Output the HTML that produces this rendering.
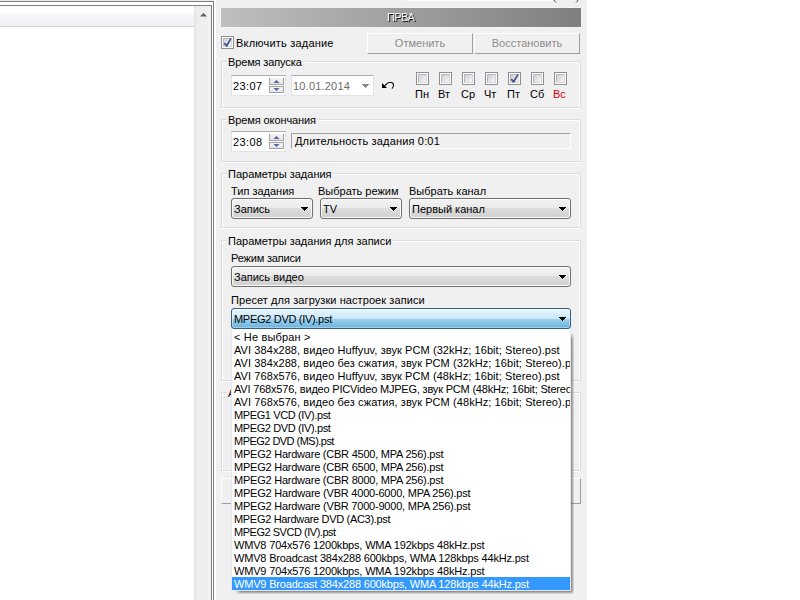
<!DOCTYPE html>
<html><head><meta charset="utf-8"><style>
*{box-sizing:border-box;margin:0;padding:0}
html,body{width:800px;height:600px;overflow:hidden;background:#fff}
body{position:relative;font-family:"Liberation Sans",sans-serif;font-size:11px;color:#000}
.a{position:absolute}
.t{position:absolute;font:11px/13px "Liberation Sans",sans-serif;white-space:pre;color:#000}
.grp{position:absolute;border:1px solid #d9dcdf;border-radius:1px}
.grpw{position:absolute;border:1px solid #fff;border-radius:1px}
.edit{position:absolute;background:#fff;border:1px solid #e0e3ea;border-top-color:#abadb3}
.cb{position:absolute;width:13px;height:13px;border:1px solid #8e8f8f;background:#fff}
.cb i{position:absolute;left:1px;top:1px;width:9px;height:9px;background:linear-gradient(135deg,#cdcfd2,#f7f7f7);border:1px solid #b5b8bc;border-right-color:#d5d7da;border-bottom-color:#d5d7da}
.combo{position:absolute;height:21px;border:1px solid #707070;border-radius:3px;background:linear-gradient(#f2f2f2 0,#ebebeb 45%,#dddddd 50%,#cfcfcf 100%);box-shadow:inset 0 0 0 1px #fcfcfc}
.arr{position:absolute;width:0;height:0;border-left:3.5px solid transparent;border-right:3.5px solid transparent;border-top:4px solid #000}
.btn{position:absolute;background:#f0f0f0;border-top:1px solid #fff;border-left:1px solid #fff;border-right:1px solid #a0a0a0;border-bottom:1px solid #a0a0a0}
</style></head><body>
<div class="a" style="left:0;top:0;width:214px;height:1px;background:#ececec"></div>
<div class="a" style="left:0;top:1px;width:213px;height:599px;background:#fff;border-top:1px solid #7f8086;border-right:1px solid #7f8086;box-sizing:content-box"></div>
<div class="a" style="left:0;top:5px;width:211px;height:595px;border-top:1px solid #7f8086;border-right:1px solid #7f8086;box-sizing:content-box;background:#fff"></div>
<div class="a" style="left:0;top:14px;width:194px;height:12px;background:linear-gradient(#f6f7f9,#f0f1f3)"></div>
<div class="a" style="left:0;top:26px;width:194px;height:1px;background:#d5d5d5"></div>
<div class="a" style="left:194px;top:6px;width:17px;height:594px;background:linear-gradient(90deg,#e2e2e2,#ededed 3px,#efefef 13px,#f3f3f5)"></div>
<svg class="a" style="left:199px;top:12px" width="10" height="6"><path d="M1 4.5 L4.5 1 L8 4.5 Z" fill="#606060"/></svg>
<div class="a" style="left:214px;top:0;width:2px;height:600px;background:#fff"></div>
<div class="a" style="left:216px;top:0;width:371px;height:600px;background:#f0f0f0"></div>
<div class="a" style="left:407px;top:0;width:145px;height:1px;background:#fff"></div>
<svg class="a" style="left:550px;top:0" width="32" height="4"><path d="M4 -2 Q4 1.5 6 2.5" stroke="#555" stroke-width="1" fill="none"/><path d="M28 -2 Q28 1.5 26 2.5" stroke="#555" stroke-width="1" fill="none"/></svg>
<div class="a" style="left:220px;top:7px;width:362px;height:21px;border:1px solid #f3f3f3"></div>
<div class="a" style="left:221px;top:8px;width:360px;height:19px;background:linear-gradient(90deg,#bfbfbf,#7f7f7f)"></div>
<div class="t" style="left:387px;top:11px;color:#fff;text-shadow:1px 1px 0 #000;letter-spacing:-0.6px">ПРВА</div>
<div class="cb" style="left:221px;top:36px"><i></i></div>
<svg class="a" style="left:221px;top:36px" width="13" height="13"><path d="M2.6 7.5 L3.9 6.5 L5.5 8.3 L9.4 2 L10.7 2.8 L6.2 10.7 L5 10.7 Z" fill="#435192"/></svg>
<div class="t" style="left:236px;top:37px;letter-spacing:0.2px">Включить задание</div>
<div class="btn" style="left:367px;top:33px;width:106px;height:21px"></div>
<div class="t" style="left:367px;top:37px;width:106px;text-align:center;color:#8c8c8c">Отменить</div>
<div class="btn" style="left:474px;top:33px;width:106px;height:21px"></div>
<div class="t" style="left:474px;top:37px;width:106px;text-align:center;color:#8c8c8c">Восстановить</div>
<div class="grpw" style="left:222px;top:62px;width:358px;height:47px"></div>
<div class="grp" style="left:221px;top:61px;width:360px;height:47px"></div>
<div class="a" style="left:227px;top:55px;width:78px;height:12px;background:#f0f0f0"></div>
<div class="t" style="left:228px;top:56px;letter-spacing:-0.13px">Время запуска</div>
<div class="edit" style="left:231px;top:75px;width:55px;height:21px"></div>
<div class="t" style="left:233px;top:80px;letter-spacing:0.4px">23:07</div>
<div class="a" style="left:269px;top:78px;width:15px;height:7px;border:1px solid #a0a0a0;border-top:0;background:linear-gradient(#f3f3f3,#e6e6e6)"></div>
<div class="a" style="left:269px;top:86px;width:15px;height:7px;border:1px solid #a0a0a0;background:linear-gradient(#f3f3f3,#e6e6e6)"></div>
<svg class="a" style="left:273px;top:79px" width="8" height="5"><path d="M0.5 4 L3.5 1 L6.5 4 Z" fill="#5563a8"/></svg>
<svg class="a" style="left:273px;top:87px" width="8" height="5"><path d="M0.5 1 L3.5 4 L6.5 1 Z" fill="#5563a8"/></svg>
<div class="edit" style="left:291px;top:75px;width:83px;height:21px"></div>
<div class="t" style="left:293px;top:80px;color:#6d6d6d;letter-spacing:0.2px">10.01.2014</div>
<svg class="a" style="left:361px;top:83px" width="9" height="7" shape-rendering="crispEdges"><path d="M0 1 H9 V2 H8 V3 H7 V4 H6 V5 H5 V6 H4 V5 H3 V4 H2 V3 H1 V2 H0 Z" fill="rgba(255,255,255,0.7)"/><path d="M1 1 H8 V2 H7 V3 H6 V4 H5 V5 H4 V4 H3 V3 H2 V2 H1 Z" fill="#8a8a8a"/></svg>
<svg class="a" style="left:380px;top:80px" width="16" height="12"><path d="M2 3 L2 8 L7 8 Z" fill="#000"/><path d="M4.6 5.9 L7.8 2.9 Q8.5 2.5 9.5 2.5 L11 2.5 Q13.5 2.5 13.5 5.2 Q13.5 7.2 11.9 8.7" stroke="#000" stroke-width="1.05" fill="none"/></svg>
<div class="cb" style="left:416px;top:72px"><i></i></div>
<div class="t" style="left:415px;top:88px;color:#000">Пн</div>
<div class="cb" style="left:439px;top:72px"><i></i></div>
<div class="t" style="left:438px;top:88px;color:#000">Вт</div>
<div class="cb" style="left:462px;top:72px"><i></i></div>
<div class="t" style="left:461px;top:88px;color:#000">Ср</div>
<div class="cb" style="left:485px;top:72px"><i></i></div>
<div class="t" style="left:484px;top:88px;color:#000">Чт</div>
<div class="cb" style="left:508px;top:72px"><i></i></div>
<svg class="a" style="left:508px;top:72px" width="13" height="13"><path d="M2.6 7.5 L3.9 6.5 L5.5 8.3 L9.4 2 L10.7 2.8 L6.2 10.7 L5 10.7 Z" fill="#435192"/></svg>
<div class="t" style="left:507px;top:88px;color:#000">Пт</div>
<div class="cb" style="left:531px;top:72px"><i></i></div>
<div class="t" style="left:530px;top:88px;color:#000">Сб</div>
<div class="cb" style="left:554px;top:72px"><i></i></div>
<div class="t" style="left:553px;top:88px;color:#d40000">Вс</div>
<div class="grpw" style="left:222px;top:120px;width:358px;height:43px"></div>
<div class="grp" style="left:221px;top:119px;width:360px;height:43px"></div>
<div class="a" style="left:227px;top:113px;width:92px;height:12px;background:#f0f0f0"></div>
<div class="t" style="left:228px;top:114px;letter-spacing:-0.1px">Время окончания</div>
<div class="edit" style="left:231px;top:131px;width:55px;height:21px"></div>
<div class="t" style="left:233px;top:136px;letter-spacing:0.4px">23:08</div>
<div class="a" style="left:269px;top:134px;width:15px;height:7px;border:1px solid #a0a0a0;border-top:0;background:linear-gradient(#f3f3f3,#e6e6e6)"></div>
<div class="a" style="left:269px;top:142px;width:15px;height:7px;border:1px solid #a0a0a0;background:linear-gradient(#f3f3f3,#e6e6e6)"></div>
<svg class="a" style="left:273px;top:135px" width="8" height="5"><path d="M0.5 4 L3.5 1 L6.5 4 Z" fill="#5563a8"/></svg>
<svg class="a" style="left:273px;top:143px" width="8" height="5"><path d="M0.5 1 L3.5 4 L6.5 1 Z" fill="#5563a8"/></svg>
<div class="a" style="left:291px;top:133px;width:280px;height:16px;background:#f0f0f0;border-top:1px solid #a0a0a0;border-left:1px solid #a0a0a0;border-right:1px solid #fff;border-bottom:1px solid #fff"></div>
<div class="t" style="left:295px;top:135px;letter-spacing:0.17px">Длительность задания 0:01</div>
<div class="grpw" style="left:222px;top:174px;width:358px;height:55px"></div>
<div class="grp" style="left:221px;top:173px;width:360px;height:55px"></div>
<div class="a" style="left:227px;top:167px;width:105px;height:12px;background:#f0f0f0"></div>
<div class="t" style="left:228px;top:168px;letter-spacing:0px">Параметры задания</div>
<div class="t" style="left:231px;top:185px">Тип задания</div>
<div class="t" style="left:318px;top:185px">Выбрать режим</div>
<div class="t" style="left:409px;top:185px">Выбрать канал</div>
<div class="combo" style="left:231px;top:198px;width:82px"></div>
<div class="t" style="left:234px;top:203px">Запись</div>
<svg class="a" style="left:300px;top:206px" width="9" height="7" shape-rendering="crispEdges"><path d="M0 1 H9 V2 H8 V3 H7 V4 H6 V5 H5 V6 H4 V5 H3 V4 H2 V3 H1 V2 H0 Z" fill="rgba(255,255,255,0.7)"/><path d="M1 1 H8 V2 H7 V3 H6 V4 H5 V5 H4 V4 H3 V3 H2 V2 H1 Z" fill="#000"/></svg>
<div class="combo" style="left:320px;top:198px;width:82px"></div>
<div class="t" style="left:323px;top:203px">TV</div>
<svg class="a" style="left:389px;top:206px" width="9" height="7" shape-rendering="crispEdges"><path d="M0 1 H9 V2 H8 V3 H7 V4 H6 V5 H5 V6 H4 V5 H3 V4 H2 V3 H1 V2 H0 Z" fill="rgba(255,255,255,0.7)"/><path d="M1 1 H8 V2 H7 V3 H6 V4 H5 V5 H4 V4 H3 V3 H2 V2 H1 Z" fill="#000"/></svg>
<div class="combo" style="left:409px;top:198px;width:162px"></div>
<div class="t" style="left:412px;top:203px">Первый канал</div>
<svg class="a" style="left:558px;top:206px" width="9" height="7" shape-rendering="crispEdges"><path d="M0 1 H9 V2 H8 V3 H7 V4 H6 V5 H5 V6 H4 V5 H3 V4 H2 V3 H1 V2 H0 Z" fill="rgba(255,255,255,0.7)"/><path d="M1 1 H8 V2 H7 V3 H6 V4 H5 V5 H4 V4 H3 V3 H2 V2 H1 Z" fill="#000"/></svg>
<div class="grpw" style="left:222px;top:241px;width:358px;height:141px"></div>
<div class="grp" style="left:221px;top:240px;width:360px;height:141px"></div>
<div class="a" style="left:227px;top:234px;width:165px;height:12px;background:#f0f0f0"></div>
<div class="t" style="left:228px;top:235px;letter-spacing:0px">Параметры задания для записи</div>
<div class="t" style="left:231px;top:252px;letter-spacing:-0.18px">Режим записи</div>
<div class="combo" style="left:231px;top:266px;width:340px"></div>
<div class="t" style="left:234px;top:271px">Запись видео</div>
<svg class="a" style="left:558px;top:274px" width="9" height="7" shape-rendering="crispEdges"><path d="M0 1 H9 V2 H8 V3 H7 V4 H6 V5 H5 V6 H4 V5 H3 V4 H2 V3 H1 V2 H0 Z" fill="rgba(255,255,255,0.7)"/><path d="M1 1 H8 V2 H7 V3 H6 V4 H5 V5 H4 V4 H3 V3 H2 V2 H1 Z" fill="#000"/></svg>
<div class="t" style="left:231px;top:294px;letter-spacing:0.08px">Пресет для загрузки настроек записи</div>
<div class="combo" style="left:231px;top:308px;width:340px;border-color:#365f7e;background:linear-gradient(#eaf6fd 0,#c6e6f8 52.6%,#9dd2ef 52.6%,#69b2dd 100%);box-shadow:inset 0 0 0 1px rgba(255,255,255,0.35)"></div>
<div class="t" style="left:234px;top:313px;letter-spacing:-0.3px">MPEG2 DVD (IV).pst</div>
<svg class="a" style="left:558px;top:316px" width="9" height="7" shape-rendering="crispEdges"><path d="M1 1 H8 V2 H7 V3 H6 V4 H5 V5 H4 V4 H3 V3 H2 V2 H1 Z" fill="#000"/></svg>
<div class="grpw" style="left:222px;top:393px;width:358px;height:79px"></div>
<div class="grp" style="left:221px;top:392px;width:360px;height:79px"></div>
<div class="a" style="left:227px;top:386px;width:99px;height:12px;background:#f0f0f0"></div>
<div class="t" style="left:228px;top:387px;letter-spacing:0px">Аудио</div>
<div class="btn" style="left:221px;top:478px;width:360px;height:26px"></div>
<div class="a" style="left:571px;top:333px;width:3px;height:258px;background:linear-gradient(90deg,rgba(40,40,50,.55),rgba(40,40,40,.3) 50%,rgba(0,0,0,.08));-webkit-mask-image:linear-gradient(transparent,#000 6px)"></div>
<div class="a" style="left:235px;top:591px;width:336px;height:3px;background:linear-gradient(rgba(40,40,50,.55),rgba(40,40,40,.3) 50%,rgba(0,0,0,.08));-webkit-mask-image:linear-gradient(90deg,transparent,#000 6px)"></div>
<div class="a" style="left:571px;top:591px;width:3px;height:3px;background:radial-gradient(circle at 0 0,rgba(40,40,50,.5),rgba(0,0,0,.05) 3px)"></div>
<div class="a" style="left:231px;top:329px;width:340px;height:262px;background:#fff;border:1px solid #e4e8ee;border-top:0;overflow:hidden">
<div class="t" style="left:2px;top:2px;letter-spacing:0.167px">&lt; Не выбран &gt;</div>
<div class="t" style="left:2px;top:15px;letter-spacing:0.081px">AVI 384x288, видео Huffyuv, звук PCM (32kHz; 16bit; Stereo).pst</div>
<div class="t" style="left:2px;top:28px;letter-spacing:0.081px">AVI 384x288, видео без сжатия, звук PCM (32kHz; 16bit; Stereo).pst</div>
<div class="t" style="left:2px;top:41px;letter-spacing:0.081px">AVI 768x576, видео Huffyuv, звук PCM (48kHz; 16bit; Stereo).pst</div>
<div class="t" style="left:2px;top:54px;letter-spacing:-0.192px">AVI 768x576, видео PICVideo MJPEG, звук PCM (48kHz; 16bit; Stereo).pst</div>
<div class="t" style="left:2px;top:67px;letter-spacing:0.081px">AVI 768x576, видео без сжатия, звук PCM (48kHz; 16bit; Stereo).pst</div>
<div class="t" style="left:2px;top:80px;letter-spacing:-0.382px">MPEG1 VCD (IV).pst</div>
<div class="t" style="left:2px;top:93px;letter-spacing:-0.382px">MPEG2 DVD (IV).pst</div>
<div class="t" style="left:2px;top:106px;letter-spacing:-0.529px">MPEG2 DVD (MS).pst</div>
<div class="t" style="left:2px;top:119px;letter-spacing:-0.230px">MPEG2 Hardware (CBR 4500, MPA 256).pst</div>
<div class="t" style="left:2px;top:132px;letter-spacing:-0.230px">MPEG2 Hardware (CBR 6500, MPA 256).pst</div>
<div class="t" style="left:2px;top:145px;letter-spacing:-0.230px">MPEG2 Hardware (CBR 8000, MPA 256).pst</div>
<div class="t" style="left:2px;top:158px;letter-spacing:-0.214px">MPEG2 Hardware (VBR 4000-6000, MPA 256).pst</div>
<div class="t" style="left:2px;top:171px;letter-spacing:-0.214px">MPEG2 Hardware (VBR 7000-9000, MPA 256).pst</div>
<div class="t" style="left:2px;top:184px;letter-spacing:-0.315px">MPEG2 Hardware DVD (AC3).pst</div>
<div class="t" style="left:2px;top:197px;letter-spacing:-0.472px">MPEG2 SVCD (IV).pst</div>
<div class="t" style="left:2px;top:210px;letter-spacing:-0.174px">WMV8 704x576 1200kbps, WMA 192kbps 48kHz.pst</div>
<div class="t" style="left:2px;top:223px;letter-spacing:-0.183px">WMV8 Broadcast 384x288 600kbps, WMA 128kbps 44kHz.pst</div>
<div class="t" style="left:2px;top:236px;letter-spacing:-0.174px">WMV9 704x576 1200kbps, WMA 192kbps 48kHz.pst</div>
<div class="a" style="left:0;top:248px;width:339px;height:13px;background:#3399ff"></div>
<div class="t" style="left:2px;top:249px;color:#fff;letter-spacing:-0.183px">WMV9 Broadcast 384x288 600kbps, WMA 128kbps 44kHz.pst</div>
</div>
</body></html>
